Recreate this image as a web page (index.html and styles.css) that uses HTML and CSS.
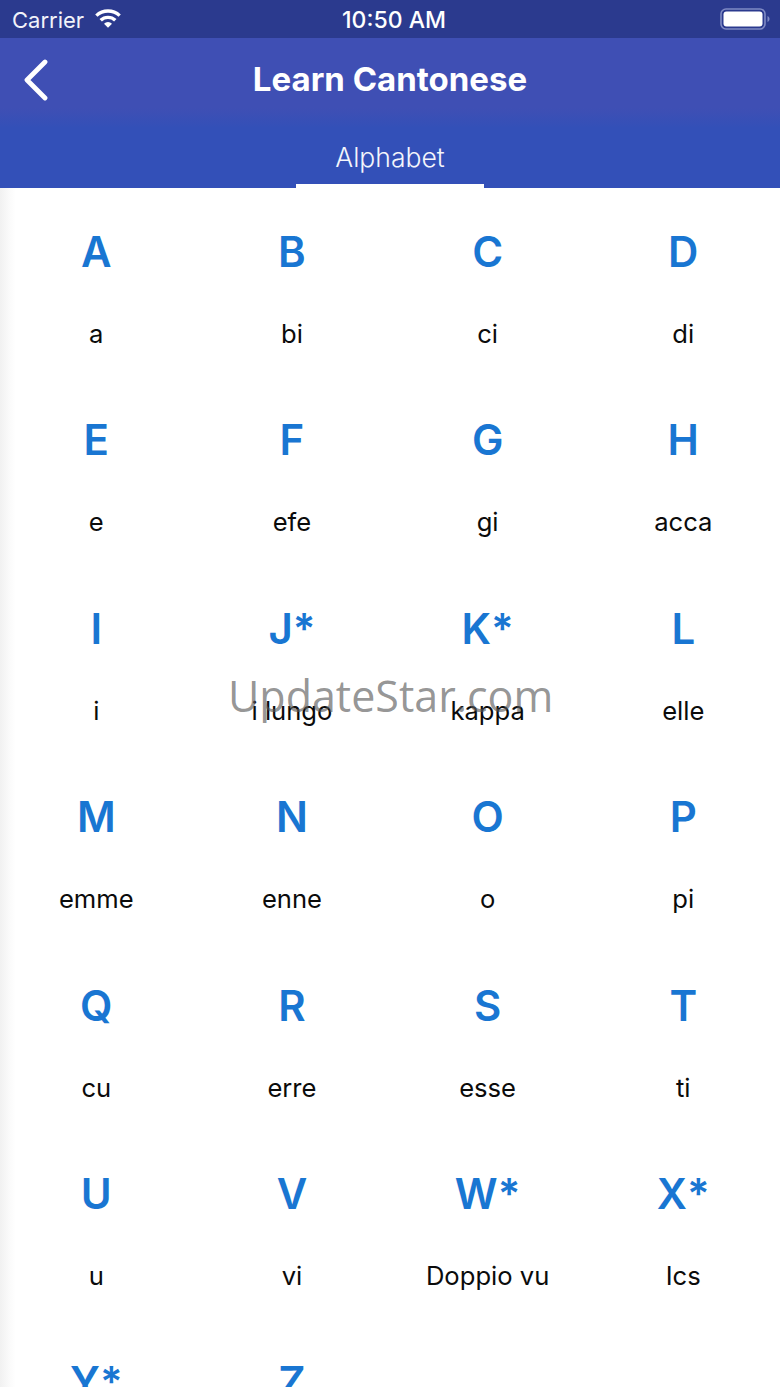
FILE: index.html
```html
<!DOCTYPE html>
<html lang="en">
<head>
<meta charset="utf-8">
<title>Learn Cantonese</title>
<link rel="stylesheet" href="styles.css">
</head>
<body>
<div class="phone">
  <header class="appbar">
    <div class="status">
      <div class="status-left">
        <span class="carrier">Carrier</span>
        <svg class="wifi" viewBox="0 0 26 19" aria-hidden="true"><path d="M13 18.800 9 14.700a5.800 5.800 0 0 1 8 0ZM6.900 12.500 4.500 10a12.400 12.400 0 0 1 17 0l-2.400 2.500a9 9 0 0 0-12.200 0ZM2.500 7.800 0.200 5.400a18.800 18.800 0 0 1 25.600 0l-2.300 2.400a15.500 15.500 0 0 0-21 0Z" fill="#fff"/></svg>
      </div>
      <span class="clock">10:50 AM</span>
      <svg class="battery" viewBox="0 0 50 22" aria-hidden="true"><rect x="1" y="1" width="44" height="20" rx="5" fill="none" stroke="#7f8ac4" stroke-width="1.6"/><rect x="3.5" y="3.5" width="39" height="15" rx="3" fill="#fff"/><path d="M47.5 8v6c1.2-.6 2-1.7 2-3s-.8-2.400-2-3Z" fill="#7f8ac4"/></svg>
    </div>
    <div class="titlebar">
      <svg class="back" viewBox="0 0 28 42" aria-hidden="true"><path d="M23 3 5 21l18 18" fill="none" stroke="#fff" stroke-width="4.800" stroke-linecap="round" stroke-linejoin="round"/></svg>
      <h1 class="title">Learn Cantonese</h1>
    </div>
    <div class="tabs"><div class="tab">Alphabet</div></div>
  </header>
  <main class="content">
    <div class="grid">
      <div class="cell"><div class="letter">A</div><div class="name">a</div></div>
      <div class="cell"><div class="letter">B</div><div class="name">bi</div></div>
      <div class="cell"><div class="letter">C</div><div class="name">ci</div></div>
      <div class="cell"><div class="letter">D</div><div class="name">di</div></div>
      <div class="cell"><div class="letter">E</div><div class="name">e</div></div>
      <div class="cell"><div class="letter">F</div><div class="name">efe</div></div>
      <div class="cell"><div class="letter">G</div><div class="name">gi</div></div>
      <div class="cell"><div class="letter">H</div><div class="name">acca</div></div>
      <div class="cell"><div class="letter">I</div><div class="name">i</div></div>
      <div class="cell"><div class="letter">J*</div><div class="name">i lungo</div></div>
      <div class="cell"><div class="letter">K*</div><div class="name">kappa</div></div>
      <div class="cell"><div class="letter">L</div><div class="name">elle</div></div>
      <div class="cell"><div class="letter">M</div><div class="name">emme</div></div>
      <div class="cell"><div class="letter">N</div><div class="name">enne</div></div>
      <div class="cell"><div class="letter">O</div><div class="name">o</div></div>
      <div class="cell"><div class="letter">P</div><div class="name">pi</div></div>
      <div class="cell"><div class="letter">Q</div><div class="name">cu</div></div>
      <div class="cell"><div class="letter">R</div><div class="name">erre</div></div>
      <div class="cell"><div class="letter">S</div><div class="name">esse</div></div>
      <div class="cell"><div class="letter">T</div><div class="name">ti</div></div>
      <div class="cell"><div class="letter">U</div><div class="name">u</div></div>
      <div class="cell"><div class="letter">V</div><div class="name">vi</div></div>
      <div class="cell"><div class="letter">W*</div><div class="name">Doppio vu</div></div>
      <div class="cell"><div class="letter">X*</div><div class="name">Ics</div></div>
      <div class="cell"><div class="letter">Y*</div></div>
      <div class="cell"><div class="letter">Z</div></div>
    </div>
  </main>
  <div class="watermark">UpdateStar.com</div>
</div>
</body>
</html>
```
FILE: styles.css
```css
* { box-sizing: border-box; }
html, body { margin: 0; padding: 0; }
body { width: 780px; height: 1387px; overflow: hidden; background: #fff; font-family: Inter, "Liberation Sans", sans-serif; }
.phone { position: relative; width: 780px; height: 1387px; overflow: hidden; }
.appbar { height: 188px; background: linear-gradient(180deg, #3f4fb4 38px, #3f4fb4 108px, #3350b8 128px, #3350b8 188px); color: #fff; }
.status { height: 38px; background: #2b3a8e; display: flex; align-items: center; justify-content: space-between; padding: 1px 12px 0 12px; position: relative; }
.status-left { display: flex; align-items: center; gap: 11px; }
.carrier { font-size: 22px; font-weight: 400; color: #f2f3fa; }
.wifi { width: 26px; height: 19px; margin-top: -3px; }
.clock { position: absolute; left: 0; right: 0; text-align: center; font-size: 23px; font-weight: 500; padding-left: 8px; }
.battery { width: 50px; height: 22px; margin-top: -2px; position: relative; left: 2px; }
.titlebar { height: 83px; display: flex; align-items: center; justify-content: center; position: relative; }
.back { position: absolute; left: 22px; top: 21px; width: 28px; height: 42px; }
.title { margin: 0; font-size: 33px; font-weight: 700; letter-spacing: 0; position: relative; top: -1px; }
.tabs { height: 67px; display: flex; justify-content: center; }
.tab { width: 188px; height: 67px; border-bottom: 4px solid #fff; text-align: center; font-size: 26.5px; font-weight: 300; line-height: 72px; color: #f4f5fb; }
.content { position: relative; height: 1199px; padding-top: 1px; background: linear-gradient(90deg, #f1f1f1 0, #fbfbfb 10px, #fff 16px); overflow: hidden; }
.grid { display: grid; grid-template-columns: repeat(4, 192px); column-gap: 3.67px; grid-auto-rows: 188.400px; padding-left: 0.3px; }
.cell { text-align: center; }
.letter { height: 124px; padding-top: 33px; font-size: 42px; line-height: 60px; font-weight: 600; color: #1976d2; }
.name { font-size: 25.6px; line-height: 42px; color: #0b0b0b; margin-top: 0; }
.watermark { position: absolute; left: 228px; top: 667px; font-family: "Open Sans", sans-serif; font-weight: 400; font-size: 43px; line-height: 58px; color: rgba(90,90,90,.65); white-space: nowrap; }
```
